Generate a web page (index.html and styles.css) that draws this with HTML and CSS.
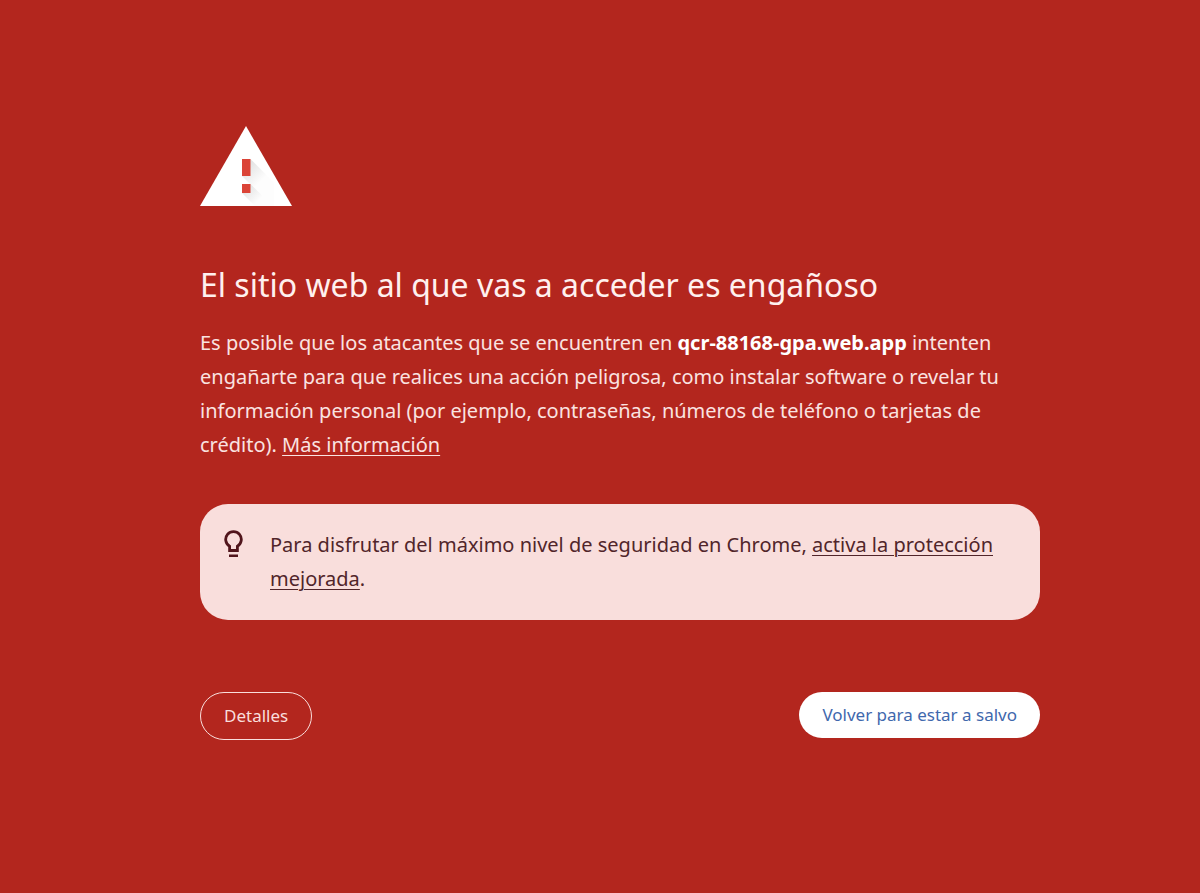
FILE: index.html
```html
<!DOCTYPE html>
<html lang="es">
<head>
<meta charset="utf-8">
<meta name="viewport" content="width=device-width, initial-scale=1">
<title>Error de seguridad</title>
<link rel="stylesheet" href="styles.css">
</head>
<body>
<main class="interstitial">
  <svg class="warning-icon" viewBox="0 0 92 80" role="img" aria-label="Advertencia">
    <defs>
      <linearGradient id="shade" gradientUnits="userSpaceOnUse" x1="46" y1="42" x2="60" y2="56">
        <stop offset="0" stop-color="#e4e4e4"/>
        <stop offset="1" stop-color="#fdfdfd"/>
      </linearGradient>
      <linearGradient id="shade-dot" gradientUnits="userSpaceOnUse" x1="46" y1="63" x2="58" y2="75">
        <stop offset="0" stop-color="#e4e4e4"/>
        <stop offset="1" stop-color="#fdfdfd"/>
      </linearGradient>
      <clipPath id="triangle"><path d="M46 0 92 80H0Z"/></clipPath>
    </defs>
    <path fill="#fff" d="M46 0 92 80H0Z"/>
    <g clip-path="url(#triangle)">
      <path fill="url(#shade)" d="M50.500 33 74 56.500V82L42 50Z"/>
      <path fill="url(#shade-dot)" d="M50.500 58 72 79.500V97L42 67Z"/>
    </g>
    <path fill="#db4437" d="M42 33h8.500v17H42zM42 58h8.500v9H42z"/>
  </svg>
  <h1 class="title">El sitio web al que vas a acceder es engañoso</h1>
  <p class="description">Es posible que los atacantes que se encuentren en <strong class="host">qcr-88168-gpa.web.app</strong> intenten engañarte para que realices una acción peligrosa, como instalar software o revelar tu información personal (por ejemplo, contraseñas, números de teléfono o tarjetas de crédito). <a class="link" href="#">Más información</a></p>
  <section class="tip">
    <svg class="bulb" viewBox="0 0 20 28" aria-hidden="true">
      <path fill="none" stroke="#51151c" stroke-width="2.8" d="M5.600 20.500V16.200A7.800 7.800 0 1 1 13.400 16.200V20.500Z"/>
      <path fill="#51151c" d="M5 24.500h9V27H5z"/>
    </svg>
    <p class="tip-text">Para disfrutar del máximo nivel de seguridad en Chrome, <a class="link" href="#">activa la protección mejorada</a>.</p>
  </section>
  <div class="actions">
    <button class="button button-details" type="button">Detalles</button>
    <button class="button button-primary" type="button">Volver para estar a salvo</button>
  </div>
</main>
</body>
</html>
```
FILE: styles.css
```css
* {
  box-sizing: border-box;
}

body {
  margin: 0;
  padding-left: 40px;
  background: #b3261e;
  color: #fae3e1;
  font-family: "Segoe UI", "Noto Sans", "Open Sans", sans-serif;
  font-size: 20px;
  line-height: 34px;
}

.interstitial {
  max-width: 880px;
  margin: 0 auto;
  padding: 126px 20px 48px;
}

.warning-icon {
  display: block;
  width: 92px;
  height: 80px;
}

.title {
  margin: 58px 0 20px;
  color: #fff0ee;
  font-size: 32px;
  font-weight: 400;
  line-height: 42px;
}

.description {
  margin: 0;
}

.host {
  color: #fff;
  font-weight: 700;
}

.link {
  color: inherit;
  text-decoration: underline;
  text-decoration-thickness: 1px;
  text-underline-offset: 3px;
}

.tip {
  display: flex;
  gap: 26px;
  margin-top: 42px;
  padding: 24px;
  border-radius: 28px;
  background: #f9dedc;
  color: #51252a;
}

.bulb {
  flex: none;
  width: 20px;
  height: 28px;
  margin-top: 2px;
}

.tip-text {
  margin: 0;
}

.actions {
  display: flex;
  align-items: flex-start;
  justify-content: space-between;
  margin-top: 72px;
}

.button {
  border: 0;
  border-radius: 24px;
  padding: 0 23px;
  font-family: inherit;
  font-size: 17px;
  line-height: 46px;
  cursor: pointer;
}

.button-details {
  border: 1px solid #f9dedc;
  background: transparent;
  color: #f9dedc;
}

.button-primary {
  background: #fff;
  color: #3f68ad;
}
```
